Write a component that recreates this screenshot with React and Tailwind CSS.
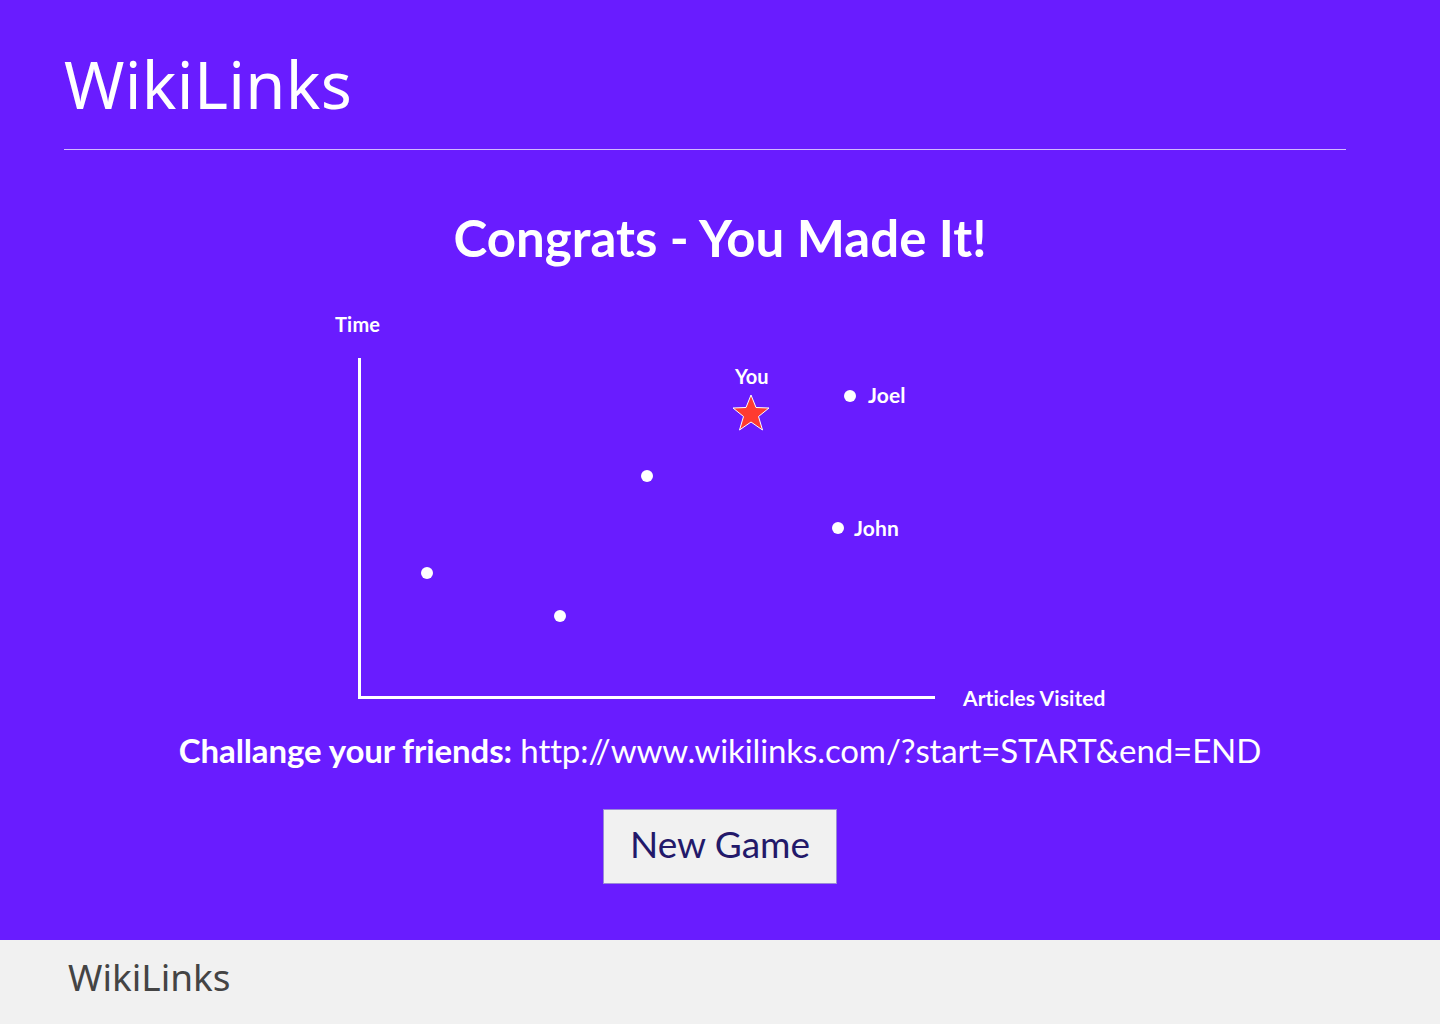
import React from "react";

const Dot = ({ x, y }) => (
  <div
    className="absolute w-[12px] h-[12px] rounded-full bg-white"
    style={{ left: x - 6, top: y - 6 }}
  />
);

const Label = ({ x, y, children }) => (
  <div className="absolute text-[21px] leading-[24px] tracking-[0.1px]" style={{ left: x, top: y }}>
    {children}
  </div>
);

export default function App() {
  // chart origin in page coords: container left = 330, top = 306
  const ox = 330;
  const oy = 306;
  return (
    <div className="w-[1440px] h-[1024px] flex flex-col" style={{ fontFamily: "Lato, 'Open Sans', sans-serif" }}>
      <main className="h-[940px] bg-[#691cff] flex flex-col">
        <header className="px-[64px] pt-[44px]">
          <h1 className="text-white text-[65px] leading-[80px] font-['Noto_Sans',sans-serif] tracking-[0.3px]">WikiLinks</h1>
          <div className="mt-[25px] w-[1282px] h-px bg-white/70" />
        </header>
        <h2 className="mt-[58px] text-center text-white text-[51px] leading-[60px] font-bold">
          Congrats - You Made It!
        </h2>
        <div className="relative mt-[38px] ml-[330px] w-[800px] h-[414px] text-white font-bold">
          <div className="absolute left-[5px] top-[7px] text-[20px] leading-[22px] tracking-[0.2px]">Time</div>
          <div className="absolute left-[28px] top-[52px] w-[3px] h-[341px] bg-white" />
          <div className="absolute left-[28px] top-[390px] w-[577px] h-[3px] bg-white" />
          <Label x={633} y={380}>Articles Visited</Label>
          <Dot x={427 - ox} y={573 - oy} />
          <Dot x={560 - ox} y={616 - oy} />
          <Dot x={647 - ox} y={476 - oy} />
          <Dot x={850 - ox} y={396 - oy} />
          <Dot x={838 - ox} y={528 - oy} />
          <Label x={538} y={77}>Joel</Label>
          <Label x={524} y={210}>John</Label>
          <div className="absolute left-[405px] top-[59px] text-[20px] leading-[22px]">You</div>
          <svg className="absolute" style={{ left: 731 - ox, top: 393 - oy }} width="40" height="40" viewBox="0 0 40 40">
            <polygon
              points="20,2 25,14.5 38,15 27.5,23.5 31.5,37 20,29 8.5,37 12.5,23.5 2,15 15,14.5"
              fill="#ff3b30"
              stroke="#ffffff"
              strokeWidth="1"
              strokeLinejoin="round"
            />
          </svg>
        </div>
        <p className="mt-[11px] text-center text-white text-[33px] leading-[38px] tracking-[-0.1px]">
          <span className="font-bold">Challange your friends:</span>{" "}
          <span>http://www.wikilinks.com/?start=START&amp;end=END</span>
        </p>
        <div className="mt-[40px] flex justify-center">
          <button className="w-[234px] h-[75px] pb-[6px] bg-[#f1f1f1] border border-[#9a8ad8] text-[#23196a] text-[37px] leading-[40px]">
            New Game
          </button>
        </div>
      </main>
      <footer className="h-[84px] bg-[#f1f1f1] px-[68px] pb-[10px] flex items-center">
        <span className="text-[#444444] text-[37px] leading-[40px] font-['Noto_Sans',sans-serif]">WikiLinks</span>
      </footer>
    </div>
  );
}
